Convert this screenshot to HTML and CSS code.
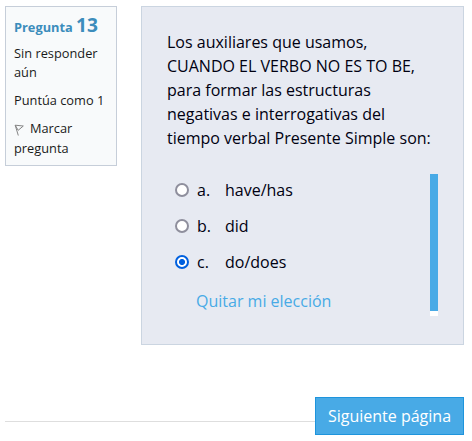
FILE: index.html
```html
<!DOCTYPE html>
<html lang="es">
<head>
<meta charset="utf-8">
<title>Cuestionario</title>
<link rel="stylesheet" href="styles.css">
</head>
<body>
<main class="question">
  <aside class="info">
    <h3 class="info-title">Pregunta <span class="number">13</span></h3>
    <div class="state">Sin responder aún</div>
    <div class="grade">Puntúa como 1</div>
    <div class="flag"><svg class="flag-icon" width="12" height="12" viewBox="0 0 12 12" fill="none" stroke="#858585"><path d="M1.2 1.2 4.3 11.5M1.2 1.2 9.3 2 4.2 6.3M1.2 1.2 4.2 6.3"/></svg>Marcar pregunta</div>
  </aside>
  <section class="formulation">
    <p class="text">Los auxiliares que usamos, CUANDO EL VERBO NO ES TO BE, para formar las estructuras negativas e interrogativas del tiempo verbal Presente Simple son:</p>
    <div class="answers">
      <div class="options">
        <label class="option"><input class="radio" type="radio" name="answer"><span class="letter">a.</span><span>have/has</span></label>
        <label class="option"><input class="radio" type="radio" name="answer"><span class="letter">b.</span><span>did</span></label>
        <label class="option"><input class="radio" type="radio" name="answer" checked><span class="letter">c.</span><span>do/does</span></label>
        <a class="clear">Quitar mi elección</a>
      </div>
      <div class="track"><div class="thumb"></div></div>
    </div>
  </section>
</main>
<footer class="nav">
  <div class="rule"></div>
  <button class="next" type="button">Siguiente página</button>
</footer>
</body>
</html>
```

FILE: styles.css
```css
* { box-sizing: border-box; }
body {
  margin: 0;
  padding: 6px 8px 0 5px;
  background: #fff;
  color: #001;
  font: 16px/24px "Open Sans", sans-serif;
}
.question { display: flex; gap: 24px; height: 339px; align-items: flex-start; }
.info {
  width: 112px;
  height: 160px;
  padding: 6px 8px;
  border: 1px solid #c6ced9;
  background: #f8fafb;
  color: #1a1a1a;
  font-size: 12.8px;
  line-height: 19.2px;
}
.info-title { margin: 0 0 5px; color: #3c8dbc; font-size: 12.8px; line-height: 24px; font-weight: 700; }
.number { font-size: 19.2px; }
.state { margin-bottom: 8.5px; }
.grade { margin-bottom: 7.4px; }
.flag { line-height: 20px; }
.flag-icon { margin-right: 4px; vertical-align: -3px; }
.formulation {
  width: 323px;
  height: 339px;
  padding: 23px 25px;
  border: 1px solid #cbd5e1;
  background: #e7eaf2;
}
.text { margin: 0 0 24px; }
.answers { display: flex; justify-content: space-between; height: 142px; }
.options { padding: 4px 0 0 8px; }
.option { display: flex; align-items: center; height: 24px; margin-bottom: 12px; }
.radio {
  appearance: none;
  width: 14px;
  height: 14px;
  margin: 0 8px 0 0;
  border: 2px solid #8f8f9d;
  border-radius: 50%;
  background: #fff;
}
.radio:checked { border-color: #0060df; background: radial-gradient(circle, #0060df 2.7px, #fff 3.3px); }
.letter { width: 28px; }
.clear { display: block; margin: 15px 0 0 21px; color: #48aae6; }
.track { width: 8px; background: #fff; }
.thumb { height: 137px; background: #48aae6; }
.nav { display: flex; margin-top: 52px; }
.rule { flex: 1; height: 1px; margin-top: 24px; background: #dedede; }
.next {
  width: 149px;
  height: 38px;
  padding: 0;
  border: 1px solid #1e94dc;
  background: #48aae6;
  color: #fff;
  font: inherit;
}
```
